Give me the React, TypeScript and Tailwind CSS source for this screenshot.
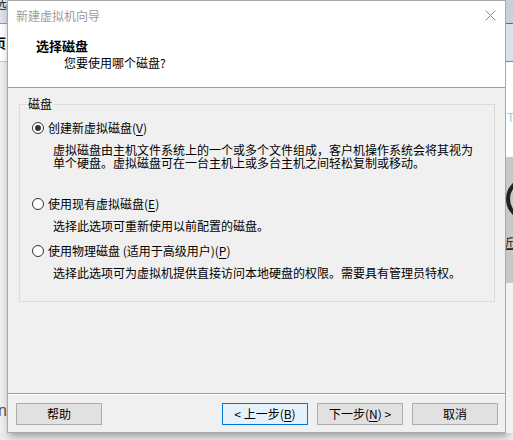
import type { ReactNode } from 'react'

const Radio = ({ checked }: { checked?: boolean }) => (
  <span className="flex items-center justify-center w-[12px] h-[12px] rounded-full border border-[#333] bg-white shrink-0">
    {checked && <span className="w-[6px] h-[6px] rounded-full bg-[#333]" />}
  </span>
)

const Key = ({ k }: { k: string }) => (
  <span className="underline underline-offset-[2px]">{k}</span>
)

const Btn = ({ children, primary }: { children: ReactNode; primary?: boolean }) => (
  <button
    className={
      primary
        ? 'w-[86px] h-[22px] flex items-center justify-center border border-[#0078d7] bg-[#e5f1fb] text-[12px] leading-[14px] text-black'
        : 'w-[86px] h-[22px] flex items-center justify-center border border-[#adadad] bg-[#e1e1e1] text-[12px] leading-[14px] text-black'
    }
  >
    {children}
  </button>
)

const options = [
  {
    id: 'new',
    label: (
      <>
        创建新虚拟磁盘(<Key k="V" />)
      </>
    ),
    desc: '虚拟磁盘由主机文件系统上的一个或多个文件组成，客户机操作系统会将其视为单个硬盘。虚拟磁盘可在一台主机上或多台主机之间轻松复制或移动。',
    checked: true,
    rowMt: 'mt-0',
    descW: 'w-[422px]',
  },
  {
    id: 'existing',
    label: (
      <>
        使用现有虚拟磁盘(<Key k="E" />)
      </>
    ),
    desc: '选择此选项可重新使用以前配置的磁盘。',
    rowMt: 'mt-[27px]',
    descW: 'w-[430px]',
  },
  {
    id: 'physical',
    label: (
      <>
        使用物理磁盘 (适用于高级用户)(<Key k="P" />)
      </>
    ),
    desc: '选择此选项可为虚拟机提供直接访问本地硬盘的权限。需要具有管理员特权。',
    rowMt: 'mt-[11px]',
    descW: 'w-[430px]',
  },
]

export default function App() {
  return (
    <div className="w-[513px] h-[440px] overflow-hidden flex bg-[#ececec] font-['Noto_Sans_CJK_SC','Microsoft_YaHei',sans-serif] text-[12px] text-black">
      {/* window behind, left edge */}
      <div className="w-[7px] h-[433px] flex flex-col overflow-hidden shrink-0">
        <div className="h-[23px] bg-[#dde3ea] overflow-hidden">
          <span className="block -ml-[6px] -mt-[4px] text-[13px] leading-[14px] text-[#333]">选</span>
        </div>
        <div className="h-px bg-[#9a9a9a]" />
        <div className="h-[37px] bg-white overflow-hidden">
          <span className="block -ml-[7px] mt-[12px] text-[13px] leading-[14px] font-bold">页</span>
        </div>
        <div className="h-px bg-[#b6cde4]" />
        <div className="flex-1 bg-[#f0f0f0] flex flex-col justify-end overflow-hidden">
          <span className="block -ml-[2px] mb-[14px] text-[16px] leading-[16px] text-[#555] font-['Liberation_Sans',sans-serif]">n</span>
        </div>
      </div>

      {/* dialog */}
      <div className="w-[499px] h-[433px] shrink-0 flex flex-col border border-[#a8a8a8] bg-[#f0f0f0] shadow-[2px_3px_8px_rgba(0,0,0,0.35)]">
        <div className="bg-white h-[86px] flex flex-col">
          <div className="h-[29px] flex items-center justify-between pl-[8px] pr-[9px]">
            <span className="leading-[16px] text-[#9b9b9b]">新建虚拟机向导</span>
            <svg width="11" height="11" viewBox="0 0 11 11" className="text-[#8a8a8a]">
              <path d="M0.5 0.5 L10.5 10.5 M10.5 0.5 L0.5 10.5" stroke="currentColor" strokeWidth="1" fill="none" />
            </svg>
          </div>
          <div className="pl-[28px] pt-[8px] leading-[16px] font-bold text-[13px]">选择磁盘</div>
          <div className="pl-[56px] mt-px leading-[16px]">您要使用哪个磁盘?</div>
        </div>
        <div className="h-px bg-[#a0a0a0]" />

        <div className="flex-1 px-[11px] pt-[8px]">
          <fieldset className="w-[476px] border border-[#dcdcdc] px-0 pb-[22px]">
            <legend className="ml-[7px] px-px leading-[16px]">磁盘</legend>
            <div className="pt-[8px] flex flex-col">
              {options.map((o) => (
                <div key={o.id} className={o.rowMt}>
                  <div className="flex items-center gap-[4px] pl-[12px] h-[16px] leading-[16px]">
                    <Radio checked={o.checked} />
                    <span>{o.label}</span>
                  </div>
                  <p className={`ml-[33px] mt-[7px] leading-[13px] ${o.descW}`}>{o.desc}</p>
                </div>
              ))}
            </div>
          </fieldset>
        </div>

        <div className="h-px bg-[#a0a0a0]" />
        <div className="h-px bg-white" />
        <div className="h-[37px] flex items-start pt-[8px] pl-[8px] pr-[7px]">
          <Btn>帮助</Btn>
          <div className="flex-1" />
          <div className="flex gap-[8px]">
            <Btn primary>
              &lt; 上一步(<Key k="B" />)
            </Btn>
            <div className="w-px" />
          </div>
          <div className="flex gap-[9px]">
            <Btn>
              下一步(<Key k="N" />) &gt;
            </Btn>
            <Btn>取消</Btn>
          </div>
        </div>
      </div>

      {/* window behind, right edge */}
      <div className="flex-1 h-[433px] flex flex-col overflow-hidden">
        <div className="h-[23px] bg-[#c9d0d8]" />
        <div className="h-px bg-[#6a6a6a]" />
        <div className="h-[37px] bg-[#d9e3ee]" />
        <div className="h-px bg-[#4a90d9]" />
        <div className="h-[95px] bg-white flex items-center overflow-hidden">
          <span className="ml-[1px] mt-[16px] text-[12px] leading-[12px] text-[#8fd0e8] font-['Liberation_Sans',sans-serif]">T</span>
        </div>
        <div className="h-[126px] bg-[#c8c8c8] flex flex-col items-start overflow-hidden">
          <div className="mt-[20px] shrink-0 w-[44px] min-w-[44px] h-[44px] rounded-full border-[4px] border-[#222]" />
          <span className="mt-[15px] -ml-[4px] shrink-0 text-[12px] leading-[14px] text-[#222] underline">近</span>
        </div>
        <div className="flex-1 bg-[#f3f3f3]" />
      </div>
    </div>
  )
}
